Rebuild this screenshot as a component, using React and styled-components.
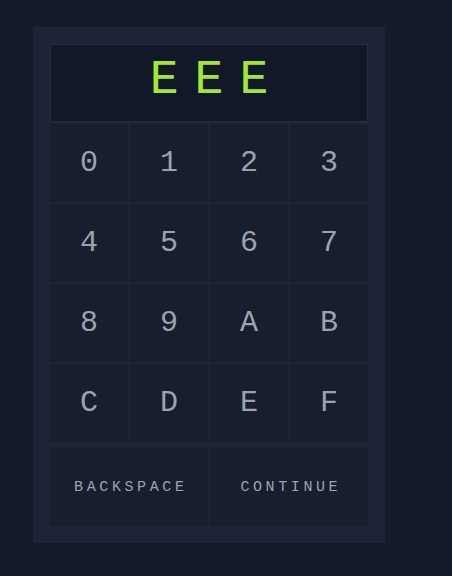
import React from "react";
import styled, { createGlobalStyle } from "styled-components";

const Global = createGlobalStyle`
  html, body { margin: 0; padding: 0; background: #161b2a; }
  body { font-family: "Liberation Mono", "Courier New", monospace; }
`;

const Page = styled.div`
  min-height: 576px;
  padding: 27px 0 0 33px;
  box-sizing: border-box;
`;

const Panel = styled.div`
  width: 352px;
  box-sizing: border-box;
  padding: 17px;
  background: #1d2436;
  display: flex;
  flex-direction: column;
`;

const Display = styled.div`
  height: 78px;
  box-sizing: border-box;
  background: #111827;
  border: 1px solid #252e40;
  display: flex;
  align-items: center;
  justify-content: center;
  gap: 16px;
  padding-bottom: 6px;
`;

const Glyph = styled.span`
  font-size: 48px;
  line-height: 1;
  color: #a3e635;
`;

const Grid = styled.div`
  margin-top: 2px;
  display: grid;
  grid-template-columns: repeat(4, 78px);
  grid-auto-rows: 78px;
  gap: 2px;
`;

const Key = styled.button`
  border: none;
  margin: 0;
  padding: 0;
  background: #181e2e;
  color: #9ca3af;
  font-family: "Liberation Mono", "Courier New", monospace;
  font-size: ${(p) => (p.$small ? "15px" : "30px")};
  letter-spacing: ${(p) => (p.$small ? "3.6px" : "0")};
  text-indent: ${(p) => (p.$small ? "3.6px" : "0")};
  display: flex;
  align-items: center;
  justify-content: center;
  cursor: pointer;
`;

const Actions = styled.div`
  margin-top: 6px;
  display: grid;
  grid-template-columns: 158px 158px;
  grid-auto-rows: 78px;
  gap: 2px;
`;

const keys = "0123456789ABCDEF".split("");

export default function App() {
  return (
    <>
      <Global />
      <Page>
        <Panel>
          <Display>
            <Glyph>E</Glyph>
            <Glyph>E</Glyph>
            <Glyph>E</Glyph>
          </Display>
          <Grid>
            {keys.map((k) => (
              <Key key={k}>{k}</Key>
            ))}
          </Grid>
          <Actions>
            <Key $small>BACKSPACE</Key>
            <Key $small>CONTINUE</Key>
          </Actions>
        </Panel>
      </Page>
    </>
  );
}
